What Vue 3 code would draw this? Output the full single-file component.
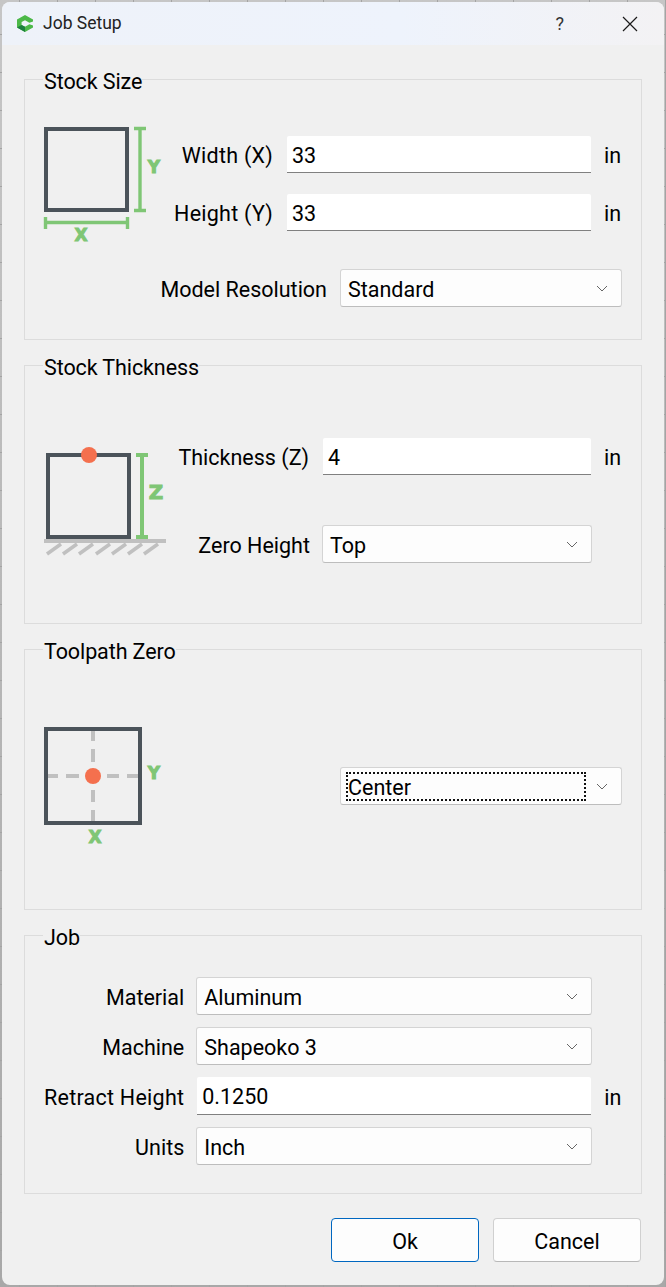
<template>
  <div class="screen">
    <div class="dialog">
      <div class="titlebar">
        <svg class="app-icon" width="16" height="17" viewBox="0 0 16 17">
          <path d="M8 0 16 4.5V6.5L12.4 7.8 8 5.2 4.6 7V10L8 11.8 12.4 9.2 16 10.5V12.5L8 17 0 12.5V4.5Z" fill="#4cb848" />
          <path d="M0 12.5 4.6 10 8 11.8V17Z" fill="#1c7f3e" />
        </svg>
        <span class="title-text">Job Setup</span>
        <span class="help">?</span>
        <svg class="close" width="16" height="16" viewBox="0 0 16 16">
          <path d="M1 1 15 15M15 1 1 15" stroke="#1a1a1a" stroke-width="1.2" fill="none" />
        </svg>
      </div>

      <div class="content">
        <section class="group size-group">
          <div class="legend">Stock Size</div>
          <div class="size-top">
            <svg class="diagram" width="122" height="120" viewBox="0 0 122 120">
              <rect x="2" y="4" width="81" height="81" fill="none" stroke="#4b535a" stroke-width="4" />
              <path d="M96 2V87M90 3.5H102M90 85.5H102" stroke="#7fc675" stroke-width="3.4" fill="none" />
              <path d="M1.5 92V104M83.5 92V104M1.5 97.5H83.5" stroke="#7fc675" stroke-width="3.4" fill="none" />
              <text x="110" y="48" class="axis" text-anchor="middle">Y</text>
              <text x="37" y="116" class="axis" text-anchor="middle">X</text>
            </svg>
            <div class="fields">
              <div class="field-row">
                <label>Width (X)</label>
                <input class="line-input" value="33" />
                <span class="unit">in</span>
              </div>
              <div class="field-row">
                <label>Height (Y)</label>
                <input class="line-input" value="33" />
                <span class="unit">in</span>
              </div>
            </div>
          </div>
          <div class="resolution-row">
            <label class="plain">Model Resolution</label>
            <div class="combo wide"><span>Standard</span><svg class="chevron" width="12" height="7" viewBox="0 0 12 7"><path d="M1 1 6 6 11 1" stroke="#666" fill="none" /></svg></div>
          </div>
        </section>

        <section class="group thickness-group">
          <div class="legend">Stock Thickness</div>
          <div class="thickness-body">
            <svg class="diagram thick-diagram" width="122" height="104" viewBox="0 0 122 104">
              <rect x="4" y="4" width="81" height="82" fill="none" stroke="#4b535a" stroke-width="4" />
              <path d="M98 2V88M92 4H104M92 86H104" stroke="#7fc675" stroke-width="4" fill="none" />
              <path d="M0 90H122" stroke="#c0c0c0" stroke-width="4" />
              <path v-for="x in hatches" :key="x" :d="`M${x} 103 ${x + 14} 93`" stroke="#c0c0c0" stroke-width="3.6" />
              <circle cx="45" cy="4" r="8" fill="#f4704e" />
              <text x="112" y="48" class="axis big" text-anchor="middle">Z</text>
            </svg>
            <div class="thickness-fields">
              <div class="field-row thick-row">
                <label class="plain">Thickness (Z)</label>
                <input class="line-input" value="4" />
                <span class="unit">in</span>
              </div>
              <div class="field-row thick-row zero-row">
                <label class="plain">Zero Height</label>
                <div class="combo"><span>Top</span><svg class="chevron" width="12" height="7" viewBox="0 0 12 7"><path d="M1 1 6 6 11 1" stroke="#666" fill="none" /></svg></div>
              </div>
            </div>
          </div>
        </section>

        <section class="group zero-group">
          <div class="legend">Toolpath Zero</div>
          <div class="zero-body">
            <svg class="diagram" width="122" height="120" viewBox="0 0 122 120">
              <path d="M49 4V14M49 22V35M49 63V75M49 83V94" stroke="#c0c0c0" stroke-width="4" />
              <path d="M4 49H14M22 49H35M63 49H75M83 49H94" stroke="#c0c0c0" stroke-width="4" />
              <rect x="2" y="2" width="94" height="94" fill="none" stroke="#4b535a" stroke-width="4" />
              <circle cx="49" cy="49" r="8" fill="#f4704e" />
              <text x="110" y="52" class="axis" text-anchor="middle">Y</text>
              <text x="51" y="116" class="axis" text-anchor="middle">X</text>
            </svg>
            <div class="combo wide focused"><span class="focus-rect">Center</span><svg class="chevron" width="12" height="7" viewBox="0 0 12 7"><path d="M1 1 6 6 11 1" stroke="#666" fill="none" /></svg></div>
          </div>
        </section>

        <section class="group job-group">
          <div class="legend">Job</div>
          <div class="job-grid">
            <template v-for="row in jobRows" :key="row.label">
              <label :class="{ plain: !row.input }">{{ row.label }}</label>
              <input v-if="row.input" class="line-input job-input" :value="row.value" />
              <div v-else class="combo"><span>{{ row.value }}</span><svg class="chevron" width="12" height="7" viewBox="0 0 12 7"><path d="M1 1 6 6 11 1" stroke="#666" fill="none" /></svg></div>
              <span class="unit">{{ row.input ? 'in' : '' }}</span>
            </template>
          </div>
        </section>

        <div class="buttons">
          <button class="btn primary">Ok</button>
          <button class="btn">Cancel</button>
        </div>
      </div>
    </div>
  </div>
</template>

<script setup>
const hatches = [3, 19, 35, 52, 68, 84, 100]

const jobRows = [
  { label: 'Material', value: 'Aluminum' },
  { label: 'Machine', value: 'Shapeoko 3' },
  { label: 'Retract Height', value: '0.1250', input: true },
  { label: 'Units', value: 'Inch' },
]
</script>

<style>
html, body { margin: 0; background: #b4b4b4; }
</style>

<style scoped>
.screen {
  width: 666px; height: 1287px; box-sizing: border-box; padding: 2px;
  background:
    linear-gradient(90deg, #a4a4a4 1px, transparent 1px) 19px 0 / 38px 38px,
    linear-gradient(#a4a4a4 1px, transparent 1px) 0 34px / 38px 38px,
    linear-gradient(#c6c6c6, #a8a8a8);
  font-family: Roboto, "Open Sans", sans-serif; font-size: 21.5px; color: #000;
}
.dialog { height: 100%; background: #f0f0f0; border-radius: 8px; overflow: hidden; display: flex; flex-direction: column; }

.titlebar { height: 43px; flex: none; display: flex; align-items: center; padding: 0 26px 0 15px; background: linear-gradient(90deg, #eef2f9 0%, #eef3fc 60%, #f3f2f4 100%); }
.app-icon { margin-right: 10px; }
.title-text { font-size: 17.5px; color: #222; flex: 1; margin-top: -2px; }
.help { font-size: 18px; color: #333; margin-right: 58px; }

.content { flex: 1; padding: 34px 22px 0; display: flex; flex-direction: column; }
.group { border: 1px solid #dcdcdc; padding: 0 19px; box-sizing: border-box; margin-bottom: 25px; }
.legend { width: fit-content; margin: -13px 0 0 -1px; padding: 2px 0 0 1px; box-sizing: border-box; height: 27px; line-height: 25px; background: #f0f0f0; letter-spacing: -0.1px; }
.size-group { height: 261px; }
.thickness-group { height: 259px; }
.zero-group { height: 261px; }
.job-group { height: 259px; margin-bottom: 24px; }

label { text-align: right; white-space: nowrap; padding-top: 2px; letter-spacing: 0.25px; }
label.plain { letter-spacing: 0; }
.unit { width: 17px; padding-top: 2px; margin-left: -1px; }
.diagram { flex: none; display: block; overflow: visible; }
.axis { font-family: "DejaVu Sans", sans-serif; font-weight: 700; font-size: 17px; fill: #7fc675; stroke: #7fc675; stroke-width: 1px; }
.axis.big { font-size: 20px; }

.line-input { box-sizing: border-box; height: 37px; width: 100%; min-width: 0; border: none; border-bottom: 1px solid #808080; background: #fff; padding: 2px 5px 0; font: inherit; color: #000; outline: none; border-radius: 2px 2px 0 0; }
.combo { box-sizing: border-box; height: 38px; background: #fdfdfd; border: 1px solid #d4d4d4; border-bottom-color: #bdbdbd; border-radius: 3px; display: flex; align-items: center; justify-content: space-between; padding: 0 13px 0 7px; }
.combo > span { padding-top: 2px; }
.chevron { flex: none; }

.size-top { display: flex; margin-top: 31px; }
.fields { flex: 1; display: flex; flex-direction: column; gap: 21px; padding-top: 11px; }
.field-row { display: grid; grid-template-columns: 1fr 304px 17px; column-gap: 14px; align-items: center; }
.resolution-row { display: flex; justify-content: flex-end; align-items: center; gap: 13px; margin-top: 24px; }
.combo.wide { width: 282px; }

.thickness-body { display: flex; margin-top: 58px; }
.thick-diagram { margin-top: 13px; }
.thick-row { grid-template-columns: 1fr 268px 17px; }
.zero-row { grid-template-columns: 1fr 270px 18px; column-gap: 12px; margin-top: 50px; }
.thickness-fields { flex: 1; }

.zero-body { display: flex; justify-content: space-between; margin-top: 63px; }
.zero-body .combo { margin-top: 40px; }
.combo > .focus-rect { flex: none; width: 236px; outline: 2px dotted #111; outline-offset: 0; padding-top: 0; line-height: 27px; height: 25px; }

.job-grid { display: grid; grid-template-columns: 1fr 396px 18px; column-gap: 12px; row-gap: 12px; align-items: center; margin-top: 27px; }
.job-input { width: 394px; height: 38px; margin-left: 1px; }
.job-grid .unit { margin-left: 0; }

.buttons { display: flex; justify-content: flex-end; gap: 14px; padding-right: 1px; }
.btn { width: 148px; height: 44px; box-sizing: border-box; border: 1px solid #d0d0d0; border-bottom-color: #b8b8b8; border-radius: 4px; background: #fdfdfd; font: inherit; color: #000; padding: 2px 0 0; }
.btn.primary { border: 1px solid #0067c0; }
</style>
